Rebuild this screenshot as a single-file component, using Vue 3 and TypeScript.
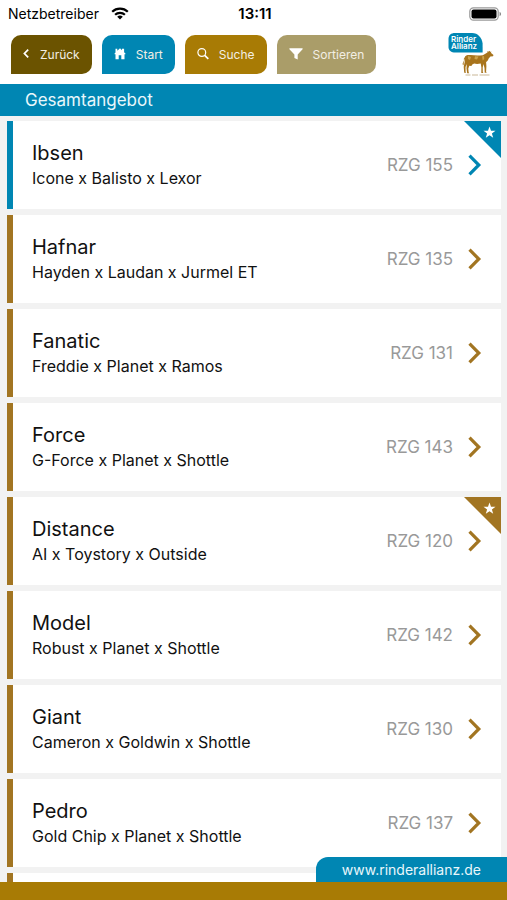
<script setup lang="ts">
interface Bull {
  name: string
  pedigree: string
  rzg: number
  tone: 'blue' | 'gold'
  starred?: boolean
}

const bulls: Bull[] = [
  { name: 'Ibsen', pedigree: 'Icone x Balisto x Lexor', rzg: 155, tone: 'blue', starred: true },
  { name: 'Hafnar', pedigree: 'Hayden x Laudan x Jurmel ET', rzg: 135, tone: 'gold' },
  { name: 'Fanatic', pedigree: 'Freddie x Planet x Ramos', rzg: 131, tone: 'gold' },
  { name: 'Force', pedigree: 'G-Force x Planet x Shottle', rzg: 143, tone: 'gold' },
  { name: 'Distance', pedigree: 'AI x Toystory x Outside', rzg: 120, tone: 'gold', starred: true },
  { name: 'Model', pedigree: 'Robust x Planet x Shottle', rzg: 142, tone: 'gold' },
  { name: 'Giant', pedigree: 'Cameron x Goldwin x Shottle', rzg: 130, tone: 'gold' },
  { name: 'Pedro', pedigree: 'Gold Chip x Planet x Shottle', rzg: 137, tone: 'gold' },
]
</script>

<template>
  <div class="app">
    <div class="status">
      <div class="carrier">
        <span>Netzbetreiber</span>
        <svg width="18" height="13" viewBox="0 0 18 13" aria-hidden="true">
          <g fill="none" stroke="#000" stroke-width="2.2">
            <path d="M1.2 4.7a11.2 11.2 0 0 1 15.6 0" />
            <path d="M4.1 7.8a7 7 0 0 1 9.8 0" />
          </g>
          <path d="M9 12.6 6.2 9.8a4 4 0 0 1 5.6 0z" />
        </svg>
      </div>
      <time class="clock">13:11</time>
      <div class="power">
        <svg width="33" height="14" viewBox="0 0 33 14" aria-hidden="true">
          <rect x="0.8" y="0.8" width="28.4" height="12.4" rx="3.6" fill="#fff" stroke="#999" stroke-width="1.2" />
          <rect x="2.5" y="2.5" width="25" height="9" rx="2" />
          <path d="M30.6 4.8v4.4q1.5-.7 1.5-2.2t-1.5-2.2z" fill="#888" />
        </svg>
      </div>
    </div>

    <header class="toolbar">
      <nav class="actions">
        <button type="button" class="action back">
          <svg width="7" height="16" viewBox="0 0 7 16" aria-hidden="true">
            <path d="m5.200 2.700-3.800 3.800 3.800 3.800" fill="none" stroke="#fff" stroke-width="1.7" />
          </svg>
          Zurück
        </button>
        <button type="button" class="action start">
          <svg width="12" height="16" viewBox="0 0 12 16" aria-hidden="true">
            <path d="M6 1.300 8 3.200V1.800h2.100v3.400l1.500 1.500-.6.8-.5-.4v5.100H7.300V8.300H4.700v3.900H1.500V7.100l-.5.4-.6-.8L1.500 5.600V1.800h1.800v2z" fill="#fff" />
          </svg>
          Start
        </button>
        <button type="button" class="action search">
          <svg width="12" height="16" viewBox="0 0 12 16" aria-hidden="true">
            <circle cx="4.800" cy="5.500" r="3.900" fill="none" stroke="#fff" stroke-width="1.200" />
            <path d="m7.700 8.400 3.600 3.400" stroke="#fff" stroke-width="1.700" />
          </svg>
          Suche
        </button>
        <button type="button" class="action sort">
          <svg width="14" height="16" viewBox="0 0 14 16" aria-hidden="true">
            <path d="M.4 1.200h13.200v1.100L8.700 7.600v5L5.400 10.900V7.600L.4 2.300z" fill="#fff" />
          </svg>
          Sortieren
        </button>
      </nav>
      <svg class="logo" width="50" height="46" viewBox="0 0 50 46" role="img" aria-label="Rinder Allianz">
        <path d="M7 1h17c6 0 10 5 10.600 10.500V20.500H7.500C3 20.500.5 18.500.5 15V7C.5 3 3 1 7 1z" fill="#0086b3" />
        <text class="logo-text" fill="#fff">
          <tspan x="3" y="10">Rinder</tspan>
          <tspan x="3" y="17">Allianz</tspan>
        </text>
        <path
          d="M17.200 24.300c1.500-1.600 3.200-1.500 5.500-1.200 4 .5 8 .6 12 .1 2-.6 3.500-2 5-2.900l-.8-.9 1.800.1.900-.7.500.9 1.500.1-.8 1 2.700 2.300-.5 1.200-2.600.1-1.900 2.300c-.5 1.700-1.300 2.600-2.400 3.400l.3 4.100-.3 5.600.6 1h-2l-.2-4.900-1-4-.8 3.600.1 4.600.5.900h-2l.1-5.600-.7-3.900c-2.200.5-4.400.6-6.500.1l-1.900 1-.9 1.300-2.100-.2-1 2.800.3 3.800.7 1h-2.100l-.7-5 .4-4.200-1.400 3 .1 4.600.6 1h-2l-.5-5.900 1-4.800c-.3-2.300-.5-3.500-.1-5.300l-.7 1.700-.2 6-.7 1.200-.4-1.900z"
          fill="#a8741c"
        />
        <path d="m20 24 3 1-1 3-2-1zm7 .3 3.500.2-1.500 3-2.500-.6zm7 .2 2-.6.200 3-1.500 1.500z" fill="#cda24a" />
        <path d="M17.500 42.600h5v1h-5zm6.500 0h6v1h-6zm7.500 0h10v1h-10z" fill="#a88b55" opacity=".6" />
      </svg>
    </header>

    <h1 class="heading">Gesamtangebot</h1>

    <main class="content">
      <ul class="list">
        <li v-for="bull in bulls" :key="bull.name">
          <a href="#" class="card" :class="bull.tone">
            <span class="info">
              <span class="name">{{ bull.name }}</span>
              <span class="pedigree">{{ bull.pedigree }}</span>
            </span>
            <span class="rating">RZG {{ bull.rzg }}</span>
            <svg class="chevron" width="14" height="22" viewBox="0 0 14 22" aria-hidden="true">
              <path d="m1.500 1.700 9.300 9.300-9.300 9.300" fill="none" stroke="currentColor" stroke-width="3.200" />
            </svg>
            <svg v-if="bull.starred" class="ribbon" width="37" height="37" viewBox="0 0 37 37" aria-hidden="true">
              <path d="M0 0h37v37z" fill="currentColor" />
              <path d="m25.500 5.500 1.500 4.200 4.500.1-3.600 2.700 1.300 4.300-3.700-2.500-3.700 2.500 1.300-4.300-3.600-2.700 4.500-.1z" fill="#fff" />
            </svg>
          </a>
        </li>
        <li class="card gold" aria-hidden="true"></li>
      </ul>
      <a href="#" class="website">www.rinderallianz.de</a>
    </main>

    <footer class="footer"></footer>
  </div>
</template>

<style>
body {
  margin: 0;
}
</style>

<style scoped>
.app {
  display: flex;
  flex-direction: column;
  height: 100vh;
  overflow: hidden;
  background: #fff;
  color: #111;
  font-family: Inter, "Liberation Sans", sans-serif;
}

.status {
  flex: none;
  display: grid;
  grid-template-columns: 1fr auto 1fr;
  align-items: center;
  height: 27px;
  padding: 0 5px 0 8px;
  font-size: 14px;
  color: #000;
}

.carrier {
  display: flex;
  align-items: center;
  gap: 12px;
}

.clock {
  font-size: 15px;
  font-weight: 600;
}

.power {
  display: flex;
  justify-content: flex-end;
}

.toolbar {
  flex: none;
  display: flex;
  justify-content: space-between;
  padding: 5px 9px 6px 11px;
}

.actions {
  display: flex;
  align-items: flex-start;
  gap: 10px;
  padding-top: 3px;
}

.action {
  display: flex;
  align-items: center;
  gap: 10px;
  height: 39px;
  padding: 0 12px;
  border: 0;
  border-radius: 10px 10px 10px 0;
  color: #f3efe4;
  font-family: inherit;
  font-size: 12px;
}

.back {
  background: #6b5300;
}

.start {
  background: #0086b3;
}

.search {
  background: #a87b05;
}

.sort {
  background: #aa9d69;
}

.logo {
  flex: none;
}

.logo-text {
  font-size: 8px;
  font-weight: 600;
}

.heading {
  flex: none;
  margin: 0;
  padding: 0 25px;
  background: #0086b3;
  color: #e9f7fb;
  font-size: 17px;
  font-weight: 400;
  line-height: 32px;
}

.content {
  position: relative;
  flex: 1;
  min-height: 0;
  overflow: hidden;
  background: #f2f2f2;
}

.list {
  display: flex;
  flex-direction: column;
  gap: 6px;
  margin: 0;
  padding: 5px 6px 0 7px;
  list-style: none;
}

.card {
  position: relative;
  box-sizing: border-box;
  display: flex;
  align-items: center;
  height: 88px;
  padding: 0 19px;
  border-left: 6px solid currentColor;
  background: #fff;
  text-decoration: none;
}

.blue {
  color: #0086b3;
}

.gold {
  color: #a27522;
}

.info {
  flex: 1;
  display: flex;
  flex-direction: column;
  color: #111;
}

.name {
  font-size: 20px;
  line-height: 26px;
}

.pedigree {
  font-size: 16px;
  line-height: 24px;
}

.rating {
  margin-right: 15px;
  color: #999;
  font-size: 17px;
}

.ribbon {
  position: absolute;
  top: 0;
  right: 0;
}

.website {
  position: absolute;
  right: 0;
  bottom: 0;
  padding: 0 26px;
  border-top-left-radius: 12px;
  background: #0086b3;
  color: #e9f7fb;
  font-size: 14px;
  line-height: 25px;
  text-decoration: none;
}

.footer {
  flex: none;
  height: 18px;
  background: #a87b05;
}
</style>
